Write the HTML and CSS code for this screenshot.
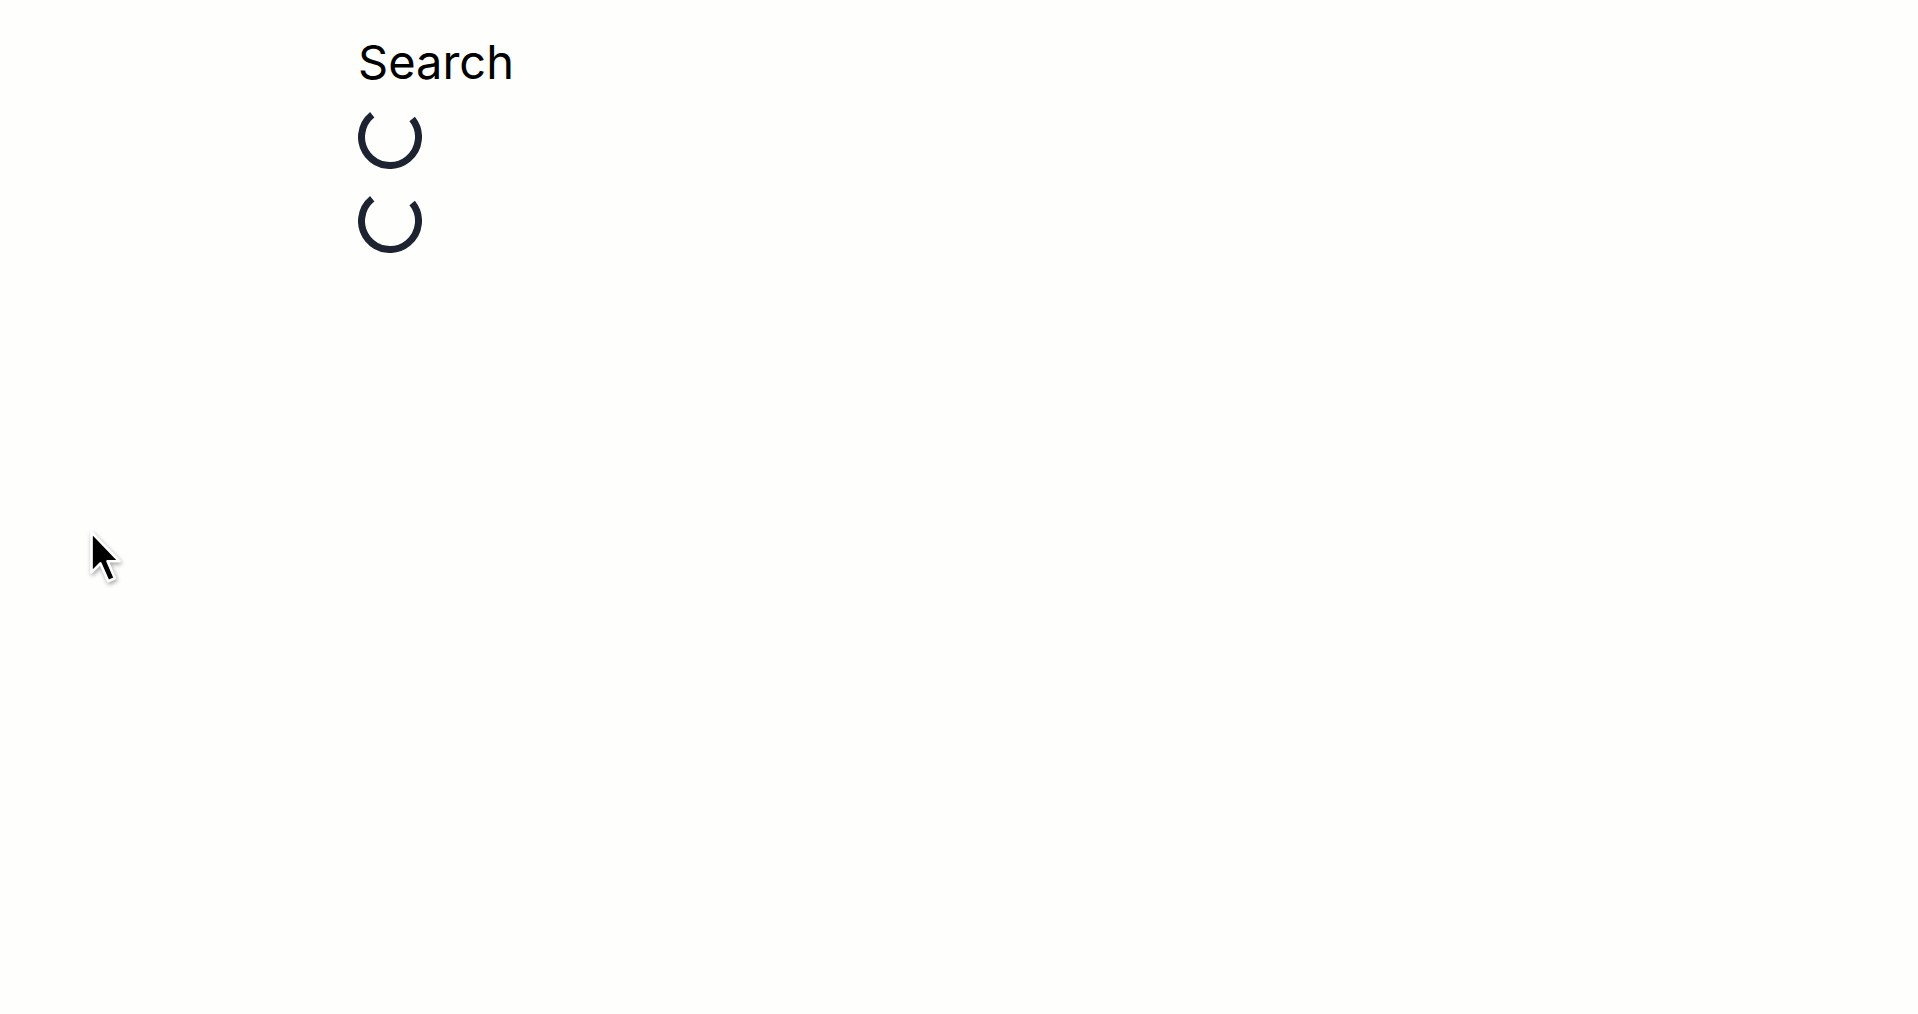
FILE: index.html
```html
<!DOCTYPE html>
<html lang="en">
<head>
    <meta charset="UTF-8">
    <meta name="viewport" content="width=device-width, initial-scale=1.0">
    <title>Search</title>
    <link rel="stylesheet" href="styles.css">
</head>
<body>
    <div class="container">
        <h1>Search</h1>

        <!-- loading states -->
        <div class="results">
            <svg class="spinner" viewBox="0 0 64 64">
                <circle cx="32" cy="32" r="28.5" transform="rotate(-39 32 32)"/>
            </svg>
            <svg class="spinner" viewBox="0 0 64 64">
                <circle cx="32" cy="32" r="28.5" transform="rotate(-39 32 32)"/>
            </svg>
        </div>
    </div>

    <!-- mouse pointer from the recording -->
    <svg class="cursor" width="34" height="58" viewBox="0 0 15 26">
        <path d="M1 1 L1 19 L5 15 L8.5 23 L11.5 21.6 L8.2 14 L13.5 14 Z" fill="#000" stroke="#fff" stroke-width="1.2" stroke-linejoin="round"/>
    </svg>
</body>
</html>
```

FILE: styles.css
```css
body {
    font-family: Inter, "Noto Sans", sans-serif;
    background-color: #fefefc;
    margin: 0;
    color: #000;
}

.container {
    padding: 34px 0 0 358px;
}

h1 {
    font-size: 47px;
    font-weight: 400;
    line-height: 1.2;
    margin: 0 0 15px 0;
}

.results {
    display: flex;
    flex-direction: column;
    gap: 20px;
}

.spinner {
    display: block;
    width: 64px;
    height: 64px;
}

.spinner circle {
    fill: none;
    stroke: #1e2331;
    stroke-width: 7;
    stroke-dasharray: 134.3 44.8;
}

.cursor {
    position: absolute;
    left: 89px;
    top: 530px;
    filter: drop-shadow(1px 2px 2px rgba(0, 0, 0, 0.35));
}
```
